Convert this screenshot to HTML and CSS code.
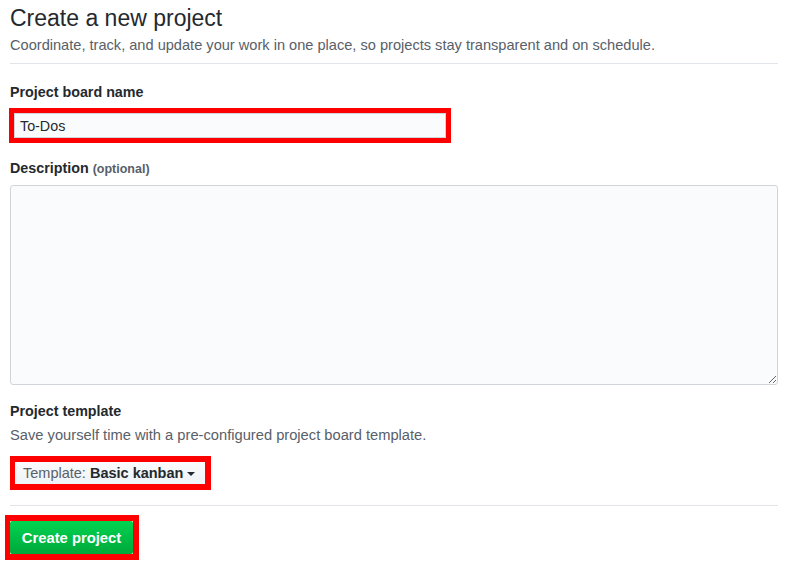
FILE: index.html
```html
<!DOCTYPE html>
<html lang="en">
<head>
<meta charset="utf-8">
<title>Create a new project</title>
<link rel="stylesheet" href="styles.css">
</head>
<body>
<div class="page">
  <div class="head">
    <h1 class="title">Create a new project</h1>
    <p class="lead">Coordinate, track, and update your work in one place, so projects stay transparent and on schedule.</p>
  </div>

  <label class="label label-name">Project board name</label>
  <div class="mark mark-input">
    <input class="input" type="text" value="To-Dos">
  </div>

  <label class="label label-desc">Description <span class="opt">(optional)</span></label>
  <textarea class="textarea"></textarea>

  <label class="label label-tpl">Project template</label>
  <p class="note">Save yourself time with a pre-configured project board template.</p>
  <div class="mark mark-tpl">
    <button class="tpl-btn" type="button"><span class="tpl-key">Template:&nbsp;</span><span class="tpl-val">Basic kanban</span><span class="caret"></span></button>
  </div>

  <div class="sep"></div>

  <div class="mark mark-create">
    <button class="create-btn" type="button">Create project</button>
  </div>
</div>
</body>
</html>
```
FILE: styles.css
```css
html, body {
  margin: 0;
  padding: 0;
  background: #fff;
}
body {
  font-family: "Liberation Sans", Arial, sans-serif;
  color: #24292e;
  font-size: 14px;
}
.page {
  width: 768px;
  padding: 0 8px 0 10px;
  display: flex;
  flex-direction: column;
  align-items: flex-start;
}
.head {
  align-self: stretch;
  padding-top: 3px;
  padding-bottom: 8px;
  border-bottom: 1px solid #e1e4e8;
}
.title {
  margin: 0;
  font-size: 23px;
  font-weight: 400;
  line-height: 30px;
  color: #24292e;
}
.lead {
  margin: 2px 0 0;
  font-size: 14.6px;
  line-height: 20px;
  color: #586069;
}
.label {
  display: block;
  font-weight: 700;
  font-size: 14.3px;
  line-height: 20px;
  color: #24292e;
}
.label-name { margin-top: 18px; }
.label-desc { margin-top: 15px; }
.label-tpl { margin-top: 16px; }
.opt {
  font-size: 12.5px;
  color: #586069;
}
.mark {
  border: 5px solid #ff0000;
  display: flex;
}
.mark-input {
  margin-top: 6px;
  margin-left: -1px;
}
.input {
  box-sizing: border-box;
  width: 432px;
  height: 25px;
  margin: 0;
  padding: 0 5px;
  border: 1px solid #d1d5da;
  background: #fafbfc;
  font-family: "Liberation Sans", Arial, sans-serif;
  font-size: 14.3px;
  color: #24292e;
  outline: none;
}
.textarea {
  box-sizing: border-box;
  display: block;
  width: 768px;
  height: 200px;
  margin: 6px 0 0;
  padding: 8px;
  border: 1px solid #d1d5da;
  border-radius: 3px;
  background: #fafbfc;
  font-family: "Liberation Sans", Arial, sans-serif;
  font-size: 14px;
  resize: both;
}
.note {
  margin: 4px 0 0;
  font-size: 14.7px;
  line-height: 20px;
  color: #586069;
}
.mark-tpl {
  margin-top: 11px;
  border-width: 6px 6px 6px 5px;
}
.tpl-btn {
  box-sizing: border-box;
  width: 190px;
  height: 22px;
  margin: 0;
  padding: 0 8px;
  border: none;
  background: linear-gradient(#fafbfc, #eff3f6);
  font-family: "Liberation Sans", Arial, sans-serif;
  font-size: 14.5px;
  line-height: 22px;
  color: #24292e;
  display: flex;
  align-items: center;
  white-space: pre;
}
.tpl-key { color: #586069; }
.tpl-val { font-weight: 700; }
.caret {
  width: 0;
  height: 0;
  margin-left: 4px;
  margin-top: 1px;
  border-left: 4px solid transparent;
  border-right: 4px solid transparent;
  border-top: 4px solid #24292e;
}
.sep {
  align-self: stretch;
  margin-top: 15px;
  height: 1px;
  background: #e1e4e8;
}
.mark-create {
  margin-top: 9px;
  margin-left: -5px;
  border-width: 6px 6px 6px 5px;
}
.create-btn {
  box-sizing: border-box;
  width: 123px;
  height: 33px;
  margin: 0;
  padding: 0 8px;
  border: none;
  border-radius: 2px;
  background: linear-gradient(#00d451, #00a83a);
  font-family: "Liberation Sans", Arial, sans-serif;
  font-size: 14.8px;
  font-weight: 700;
  color: #fff;
  text-align: center;
}
```
